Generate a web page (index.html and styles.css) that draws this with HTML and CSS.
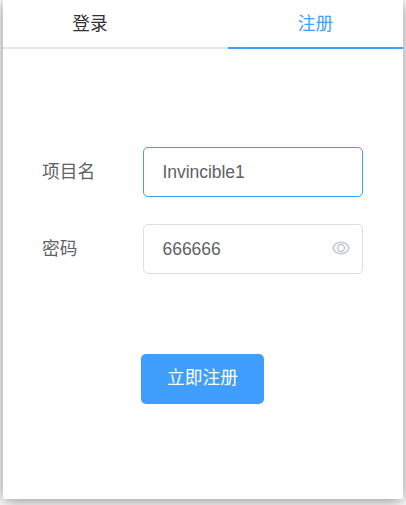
FILE: index.html
```html
<!DOCTYPE html>
<html lang="zh-CN">
<head>
<meta charset="utf-8">
<title>注册</title>
<link rel="stylesheet" href="styles.css">
</head>
<body>
<main class="card">
  <nav class="tabs">
    <a class="tab">登录</a>
    <a class="tab tab-active">注册</a>
  </nav>
  <form class="form">
    <div class="row">
      <label class="label">项目名</label>
      <div class="field field-focus"><span class="value">Invincible1</span></div>
    </div>
    <div class="row">
      <label class="label">密码</label>
      <div class="field">
        <span class="value">666666</span>
        <svg class="eye" viewBox="0 0 18 14" fill="none" stroke="currentColor" stroke-width="1.4">
          <path d="M.7 7C2.600 3.200 5.400 1.200 9 1.200S15.400 3.200 17.300 7C15.400 10.800 12.600 12.800 9 12.800S2.600 10.800 .7 7Z"/>
          <circle cx="9" cy="7" r="3.500"/>
        </svg>
      </div>
    </div>
    <button class="submit" type="button">立即注册</button>
  </form>
</main>
</body>
</html>
```

FILE: styles.css
```css
* {
  box-sizing: border-box;
}

body {
  margin: 0;
  height: 505px;
  overflow: hidden;
  background: #fff;
  color: #606266;
  font: 17.7px/25px "Liberation Sans", "Noto Sans CJK SC", sans-serif;
}

.card {
  width: 400px;
  height: 499px;
  margin: 0 3px;
  background: #fff;
  box-shadow: 0 2px 15px rgba(0, 0, 0, 0.46);
}

.tabs {
  display: grid;
  grid-template-columns: 225px 175px;
  height: 49px;
}

.tab {
  padding: 12px 51px 0 0;
  border-bottom: 2px solid #e4e7ed;
  color: #303133;
  text-align: center;
}

.tab-active {
  padding-right: 0;
  border-color: #409eff;
  color: #409eff;
}

.form {
  display: flex;
  flex-direction: column;
  gap: 27px;
  padding: 98px 40px 0 39px;
}

.row {
  display: flex;
  align-items: center;
  height: 50px;
}

.label {
  width: 101px;
}

.field {
  display: flex;
  flex: 1;
  align-items: center;
  justify-content: space-between;
  height: 50px;
  padding: 0 12px 0 18.5px;
  border: 1px solid #dcdfe6;
  border-radius: 5px;
}

.field-focus {
  border-color: #409eff;
}

.value {
  font-size: 17.5px;
  letter-spacing: -0.04px;
}

.eye {
  width: 18px;
  height: 14px;
  margin-bottom: 2px;
  color: #c0c4cc;
}

.submit {
  width: 123px;
  height: 50px;
  margin: 53px 0 0 99px;
  padding: 0 0 2px;
  border: 0;
  border-radius: 5px;
  background: #409eff;
  color: #fff;
  font: inherit;
}
```
